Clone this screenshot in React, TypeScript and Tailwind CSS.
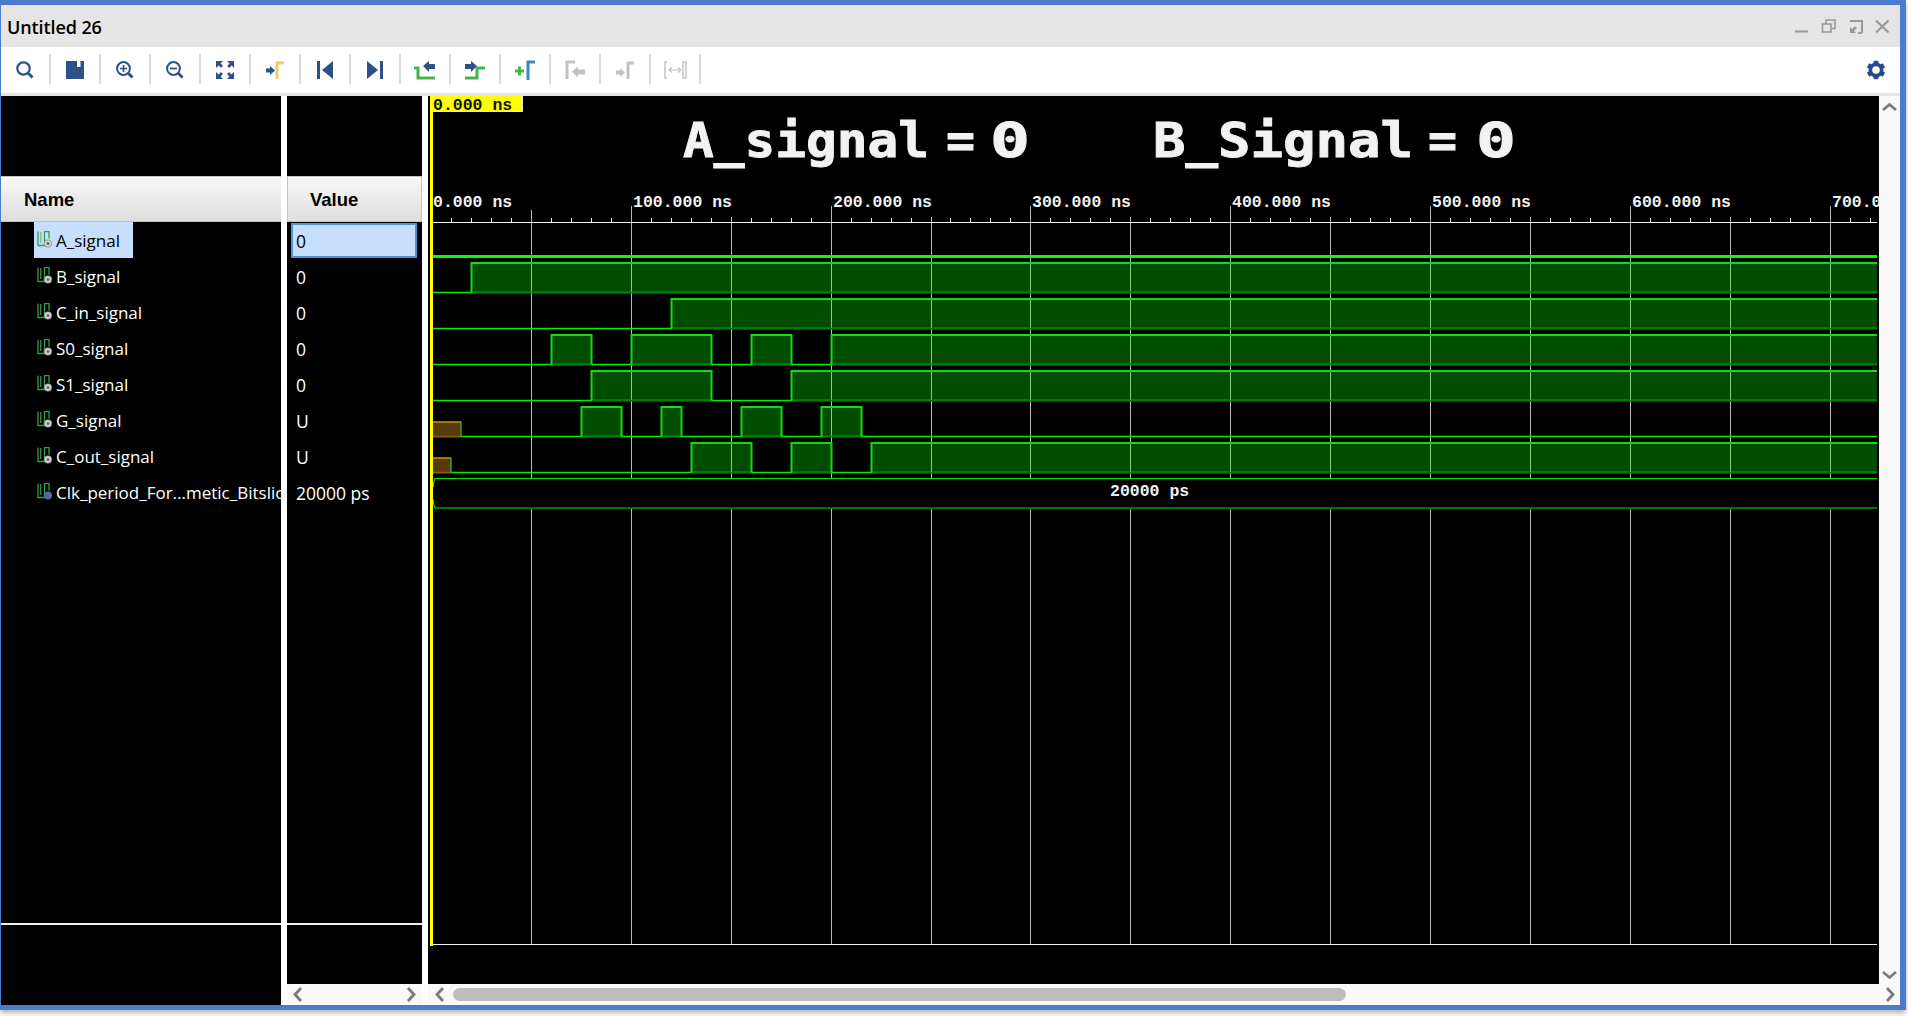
import { Fragment } from 'react';

const NAVY = '#2e5088';
const GREEN = '#45b549';
const GREY = '#c2c2c2';

// the time axis runs a hair under 2px per ns, starting at 431
const X0 = 431;
const END_X = 1877;
const x = (ns: number) => Math.round(X0 + ns * 1.998);

type Signal = { name: string; value: string; clock?: boolean };

const signals: Signal[] = [
  { name: 'A_signal', value: '0' },
  { name: 'B_signal', value: '0' },
  { name: 'C_in_signal', value: '0' },
  { name: 'S0_signal', value: '0' },
  { name: 'S1_signal', value: '0' },
  { name: 'G_signal', value: 'U' },
  { name: 'C_out_signal', value: 'U' },
  { name: 'Clk_period_For...metic_Bitslice', value: '20000 ps', clock: true },
];

// high pulses per row, [start, end] in ns (null end = runs off the screen)
const pulses: { top: number; spans: [number, number | null][]; undef?: number }[] = [
  { top: 263, spans: [[20, null]] },
  { top: 299, spans: [[120, null]] },
  { top: 335, spans: [[60, 80], [100, 140], [160, 180], [200, null]] },
  { top: 371, spans: [[80, 140], [180, null]] },
  { top: 407, spans: [[75, 95], [115, 125], [155, 175], [195, 215]], undef: 461 },
  { top: 443, spans: [[130, 160], [180, 200], [220, null]], undef: 451 },
];

const hundreds = [1, 2, 3, 4, 5, 6, 7, 8, 9, 10, 11, 12, 13, 14];
const majors = [0, 1, 2, 3, 4, 5, 6, 7];
const minorTicks = Array.from({ length: 72 }, (_, i) => i + 1).filter((i) => i % 5 !== 0).map((i) => x(i * 10));

function SignalIcon({ clock }: { clock?: boolean }) {
  return (
    <svg width="16" height="17" viewBox="0 0 16 17" className="shrink-0 -mt-[1px]">
      <path d="M1 0.5v14h6.5V0.5H12v7" fill="none" stroke="#2fa344" strokeWidth="1.3" />
      <path d="M3.8 1v11" stroke="#7d9c83" strokeWidth="1" />
      {clock ? (
        <circle cx="11" cy="12.5" r="4" fill="#56689c" />
      ) : (
        <>
          <circle cx="11" cy="12.5" r="3.7" fill="#d8d8d8" stroke="#8a8a8a" strokeWidth="0.8" />
          <circle cx="11" cy="12.5" r="1.5" fill="#666" />
        </>
      )}
    </svg>
  );
}

function Tool({ children }: { children: React.ReactNode }) {
  return (
    <div className="flex h-[46px] w-[50px] shrink-0 items-center justify-center relative">
      <svg width="24" height="24" viewBox="0 0 24 24">
        {children}
      </svg>
      <div className="absolute right-[-1px] top-[7px] h-[30px] w-[2px] bg-[#dadada]" />
    </div>
  );
}

function Toolbar() {
  return (
    <div className="flex h-[46px] items-center justify-between bg-white">
      <div className="flex -ml-[1px]">
        <Tool>
          <circle cx="10.5" cy="10.5" r="6.2" fill="none" stroke={NAVY} strokeWidth="2.2" />
          <path d="M15.5 15.5l4 4" stroke={NAVY} strokeWidth="3" />
        </Tool>
        <Tool>
          <path d="M3 3h18v18H3z" fill={NAVY} />
          <path d="M14 3h3.5v6H14z" fill="#fff" />
        </Tool>
        <Tool>
          <circle cx="10.5" cy="10.5" r="6.4" fill="none" stroke={NAVY} strokeWidth="2" />
          <path d="M15.5 15.5l4 4" stroke={NAVY} strokeWidth="3" />
          <path d="M7 10.5h7M10.5 7v7" stroke={NAVY} strokeWidth="1.6" />
        </Tool>
        <Tool>
          <circle cx="10.5" cy="10.5" r="6.4" fill="none" stroke={NAVY} strokeWidth="2" />
          <path d="M15.5 15.5l4 4" stroke={NAVY} strokeWidth="3" />
          <path d="M7 10.5h7" stroke={NAVY} strokeWidth="1.8" />
        </Tool>
        <Tool>
          <path d="M3 3h7l-2.4 2.4 2.4 2.4-2 2-2.4-2.4L3 10zM21 3v7l-2.4-2.4-2.4 2.4-2-2 2.4-2.4L14 3zM3 21v-7l2.6 2.4L8 14l2 2-2.4 2.4L10 21zM21 21h-7l2.4-2.6L14 16l2-2 2.4 2.4L21 14z" fill={NAVY} />
        </Tool>
        <Tool>
          <path d="M3 10.5h4V8l5 4.5-5 4.5v-2.5H3z" fill={NAVY} />
          <path d="M14 21V5h7" fill="none" stroke="#e5cf73" strokeWidth="3" />
        </Tool>
        <Tool>
          <path d="M4 3h3v18H4z" fill={NAVY} />
          <path d="M20 3v18L9 12z" fill={NAVY} />
        </Tool>
        <Tool>
          <path d="M4 3v18l11-9z" fill={NAVY} />
          <path d="M17 3h3v18h-3z" fill={NAVY} />
        </Tool>
        <Tool>
          <path d="M1 10h4v10h17" fill="none" stroke={GREEN} strokeWidth="3" />
          <path d="M10 8l6-5v3h6v5h-6v3z" fill={NAVY} />
        </Tool>
        <Tool>
          <path d="M2 20h12V10h8" fill="none" stroke={GREEN} strokeWidth="3" />
          <path d="M14 8l-6-5v3H2v5h6v3z" fill={NAVY} />
        </Tool>
        <Tool>
          <path d="M2 13h9M6.5 8.5v9" stroke={GREEN} strokeWidth="3" />
          <path d="M15 22V4h7" fill="none" stroke="#3d86c0" strokeWidth="3" />
        </Tool>
        <Tool>
          <path d="M4 21V4h8" fill="none" stroke={GREY} strokeWidth="3" />
          <path d="M9 14.5l6-5v3h7v5h-7v3z" fill={GREY} transform="translate(0 -1)" />
        </Tool>
        <Tool>
          <path d="M3 12.5h4V10l5 4.5-5 4.5v-2.5H3z" fill={GREY} />
          <path d="M15 21V5h6" fill="none" stroke={GREY} strokeWidth="3" />
        </Tool>
        <Tool>
          <path d="M4 4H2v16h2M2 4h2M20 4h3v16h-3z" fill="none" stroke={GREY} strokeWidth="1.4" />
          <path d="M6 12h12M6 12l3-2.5M6 12l3 2.5M18 12l-3-2.5M18 12l-3 2.5" fill="none" stroke={GREY} strokeWidth="1.2" />
        </Tool>
      </div>
      <svg width="20" height="20" viewBox="0 0 20 20" className="mr-[14px]">
        <circle cx="10" cy="10" r="5.6" fill="none" stroke="#264a8a" strokeWidth="3.6" />
        {[0, 60, 120, 180, 240, 300].map((a) => (
          <rect key={a} x="7.6" y="0.8" width="4.8" height="4" fill="#264a8a" transform={`rotate(${a} 10 10)`} />
        ))}
      </svg>
    </div>
  );
}

function TitleBar() {
  return (
    <div className="flex h-[42px] items-center justify-between bg-[#e5e5e5] pl-[6px] pr-[11px]">
      <span className="pt-[2px] text-[18px] font-semibold text-black [font-family:'Open_Sans',sans-serif] tracking-[-0.1px]">
        Untitled 26
      </span>
      <svg width="95" height="15" viewBox="0 0 95 15" className="mt-[1px]">
        <path d="M1 12.5h13" stroke="#999" strokeWidth="2" />
        <path d="M32 4.5V1h9v8.5h-4M28.5 5H37v8h-8.5z" fill="none" stroke="#999" strokeWidth="1.6" />
        <path d="M56 2h12v12M64 14h4" fill="none" stroke="#999" strokeWidth="2" />
        <path d="M56 14V8l2 2 3-3 2 2-3 3 2 2z" fill="#999" />
        <path d="M82 1.5l12.5 12M94.5 1.5L82 13.5" stroke="#999" strokeWidth="2" />
      </svg>
    </div>
  );
}

function Chevron({ dir }: { dir: 'left' | 'right' | 'up' | 'down' }) {
  const paths = {
    left: 'M9 1L3 7.5 9 14',
    right: 'M2 1L8 7.5 2 14',
    up: 'M1 8l6.5-5.5L14 8',
    down: 'M1 2l6.5 5.5L14 2',
  };
  const horizontal = dir === 'left' || dir === 'right';
  return (
    <svg width={horizontal ? 11 : 15} height={horizontal ? 15 : 10} viewBox={horizontal ? '0 0 11 15' : '0 0 15 10'}>
      <path d={paths[dir]} fill="none" stroke="#7a7a7a" strokeWidth="2.8" />
    </svg>
  );
}

function NameColumn() {
  return (
    <div className="flex w-[280px] shrink-0 flex-col bg-black">
      <div className="h-[80px]" />
      <div className="flex h-[46px] items-center border-y border-[#c4c4c4] bg-gradient-to-b from-[#f7f7f7] to-[#dedede] pl-[23px] pt-[2px] text-[18.5px] font-bold text-black [font-family:'Liberation_Sans',sans-serif]">
        Name
      </div>
      <div className="flex flex-col">
        {signals.map((s, i) => (
          <div key={s.name} className="flex h-[36px] items-center overflow-hidden pl-[33px]">
            <div
              className={`flex h-[36px] shrink-0 items-center gap-[3px] pl-[3px] pr-[13px] ${
                i === 0 ? 'bg-[#c8defd] text-black' : 'text-white'
              } text-[17px] whitespace-nowrap [font-family:'Open_Sans',sans-serif]`}
            >
              <SignalIcon clock={s.clock} />
              <span className="pt-[2px]">{s.name}</span>
            </div>
          </div>
        ))}
      </div>
      <div className="flex-1" />
      <div className="mb-[80px] h-[2px] bg-[#f0f0f0]" />
    </div>
  );
}

function ValueColumn() {
  return (
    <div className="flex w-[135px] shrink-0 flex-col">
      <div className="flex flex-1 flex-col bg-black">
        <div className="h-[80px]" />
        <div className="flex h-[46px] items-center border border-[#c4c4c4] bg-gradient-to-b from-[#f7f7f7] to-[#dedede] pl-[22px] pt-[2px] text-[18.5px] font-bold text-black [font-family:'Liberation_Sans',sans-serif]">
          Value
        </div>
        <div className="flex flex-col">
          {signals.map((s, i) => (
            <div key={s.name} className="flex h-[36px] items-center text-[17.5px] [font-family:'Open_Sans',sans-serif]">
              {i === 0 ? (
                <div className="ml-[4px] flex h-[35px] w-[126px] items-center border-2 border-[#4a96d8] bg-[#c8defd] pl-[3px] pt-[2px] text-black">
                  {s.value}
                </div>
              ) : (
                <span className="pl-[9px] pt-[2px] text-white">{s.value}</span>
              )}
            </div>
          ))}
        </div>
        <div className="flex-1" />
        <div className="mb-[59px] h-[2px] bg-[#f0f0f0]" />
      </div>
      <div className="flex h-[21px] items-center justify-between bg-[#f9f9f9] pl-[5px] pr-[5px]">
        <Chevron dir="left" />
        <Chevron dir="right" />
      </div>
    </div>
  );
}

function WaveView() {
  const banner = {
    fill: '#f2f2f2',
    stroke: '#f2f2f2',
    strokeWidth: 0.9,
    fontSize: 48,
    fontWeight: 700,
    fontFamily: "'DejaVu Sans Mono', monospace",
  };
  return (
    <svg width="1451" height="888" viewBox="428 96 1451 888" className="block bg-black">
      {/* banner text */}
      <text y="157" {...banner}>
        <tspan x="683" textLength="246" lengthAdjust="spacingAndGlyphs">A_signal</tspan>
        <tspan x="946">=</tspan>
        <tspan x="990" textLength="40" lengthAdjust="spacingAndGlyphs">0</tspan>
      </text>
      <text y="157" {...banner}>
        <tspan x="1153" textLength="260" lengthAdjust="spacingAndGlyphs">B_Signal</tspan>
        <tspan x="1428">=</tspan>
        <tspan x="1476" textLength="40" lengthAdjust="spacingAndGlyphs">0</tspan>
      </text>

      {/* grid + ruler */}
      {hundreds.map((h) => (
        <line key={h} x1={x(h * 50) + 0.5} x2={x(h * 50) + 0.5} y1={h % 2 === 0 ? 206 : h === 1 ? 210 : 217} y2="944" stroke="#b8b8b8" strokeWidth="1" />
      ))}
      {minorTicks.map((t) => (
        <line key={t} x1={t + 0.5} x2={t + 0.5} y1="218" y2="222" stroke="#e8e8e8" strokeWidth="1" />
      ))}
      <line x1="433" x2={END_X} y1="222.5" y2="222.5" stroke="#f4f4f4" strokeWidth="1" />
      <line x1="433" x2={END_X} y1="944.5" y2="944.5" stroke="#f4f4f4" strokeWidth="1" />
      {majors.map((m) => (
        <text key={m} x={x(m * 100) + 2} y="207" fill="#f2f2f2" fontSize="16.5" fontWeight="700" fontFamily="'Liberation Mono', monospace">
          {m === 0 ? '0.000 ns' : `${m}00.000 ns`}
        </text>
      ))}

      {/* A_signal, flat high */}
      <rect x="433" y="255" width={END_X - 433} height="3" fill="#00ff00" />

      {pulses.map((row) => {
        const low = row.top + 29.5;
        return (
          <Fragment key={row.top}>
            <line x1="433" x2={END_X} y1={low} y2={low} stroke="#00f000" strokeWidth="1.4" />
            {row.undef && (
              <>
                <rect x="433" y={row.top + 14.5} width={row.undef - 433} height="15" fill="#553a0c" />
                <line x1="433" x2={row.undef} y1={row.top + 15} y2={row.top + 15} stroke="#e08a10" strokeWidth="1.4" />
                <line x1="433" x2={row.undef} y1={low} y2={low} stroke="#8a5a10" strokeWidth="1.4" />
                <line x1={row.undef} x2={row.undef} y1={row.top + 14.5} y2={low} stroke="#3fae1e" strokeWidth="1.4" />
              </>
            )}
            {row.spans.map(([a, b]) => {
              const l = x(a) + 0.5;
              const r = b === null ? END_X : x(b) + 0.5;
              return (
                <Fragment key={a}>
                  <rect x={l} y={row.top} width={r - l} height="29.5" fill="#00ff00" fillOpacity="0.3" />
                  <line x1={l} x2={r} y1={low} y2={low} stroke="#007c00" strokeWidth="1.4" />
                  <path d={b === null ? `M${l} ${low}V${row.top}H${r}` : `M${l} ${low}V${row.top}H${r}V${low}`} fill="none" stroke="#14dc14" strokeWidth="2" />
                </Fragment>
              );
            })}
          </Fragment>
        );
      })}

      {/* clock period bus */}
      <rect x="433" y="478" width={END_X - 433} height="31" fill="#000" />
      <path d={`M433.5 487v-4l1.5-4.5h1H${END_X}`} fill="none" stroke="#00e800" strokeWidth="1.2" />
      <path d={`M433.5 499.5v4l1.5 4.5h1H${END_X}`} fill="none" stroke="#00e800" strokeWidth="1.2" />
      <text x="1110" y="496" fill="#f2f2f2" fontSize="16.5" fontWeight="700" fontFamily="'Liberation Mono', monospace">
        20000 ps
      </text>

      {/* cursor */}
      <rect x="430" y="96" width="3" height="850" fill="#ffff00" />
      <rect x="430" y="96" width="92" height="15" fill="#ffff00" />
      <path d="M430 111.5h92.5V96" fill="none" stroke="#e8e8e8" strokeWidth="1" />
      <text x="433" y="110" fill="#111" fontSize="16.5" fontWeight="700" fontFamily="'Liberation Mono', monospace">
        0.000 ns
      </text>
    </svg>
  );
}

function WavePanel() {
  return (
    <div className="flex min-w-0 flex-1 flex-col">
      <div className="flex h-[888px]">
        <WaveView />
        <div className="flex flex-1 flex-col items-center justify-between bg-[#f9f9f9] pb-[4px] pt-[6px]">
          <Chevron dir="up" />
          <Chevron dir="down" />
        </div>
      </div>
      <div className="flex h-[21px] items-center gap-[8px] bg-[#f9f9f9] pl-[6px] pr-[4px]">
        <Chevron dir="left" />
        <div className="h-[13px] w-[893px] rounded-full bg-[#bdbdbd]" />
        <div className="flex-1" />
        <Chevron dir="right" />
      </div>
    </div>
  );
}

export default function App() {
  return (
    <div className="h-[1016px] w-[1908px] overflow-hidden bg-white">
      <div className="flex h-[1010px] w-[1906px] flex-col border-b-[5px] border-l border-r-[6px] border-t-[5px] border-[#4a7bcd] shadow-[0_3px_5px_rgba(0,0,0,0.3)]">
        <TitleBar />
        <Toolbar />
        <div className="h-[3px] bg-[#e5e5e5]" />
        <div className="flex min-h-0 flex-1 bg-white">
          <NameColumn />
          <div className="w-[6px] shrink-0" />
          <ValueColumn />
          <div className="w-[6px] shrink-0" />
          <WavePanel />
        </div>
      </div>
    </div>
  );
}
